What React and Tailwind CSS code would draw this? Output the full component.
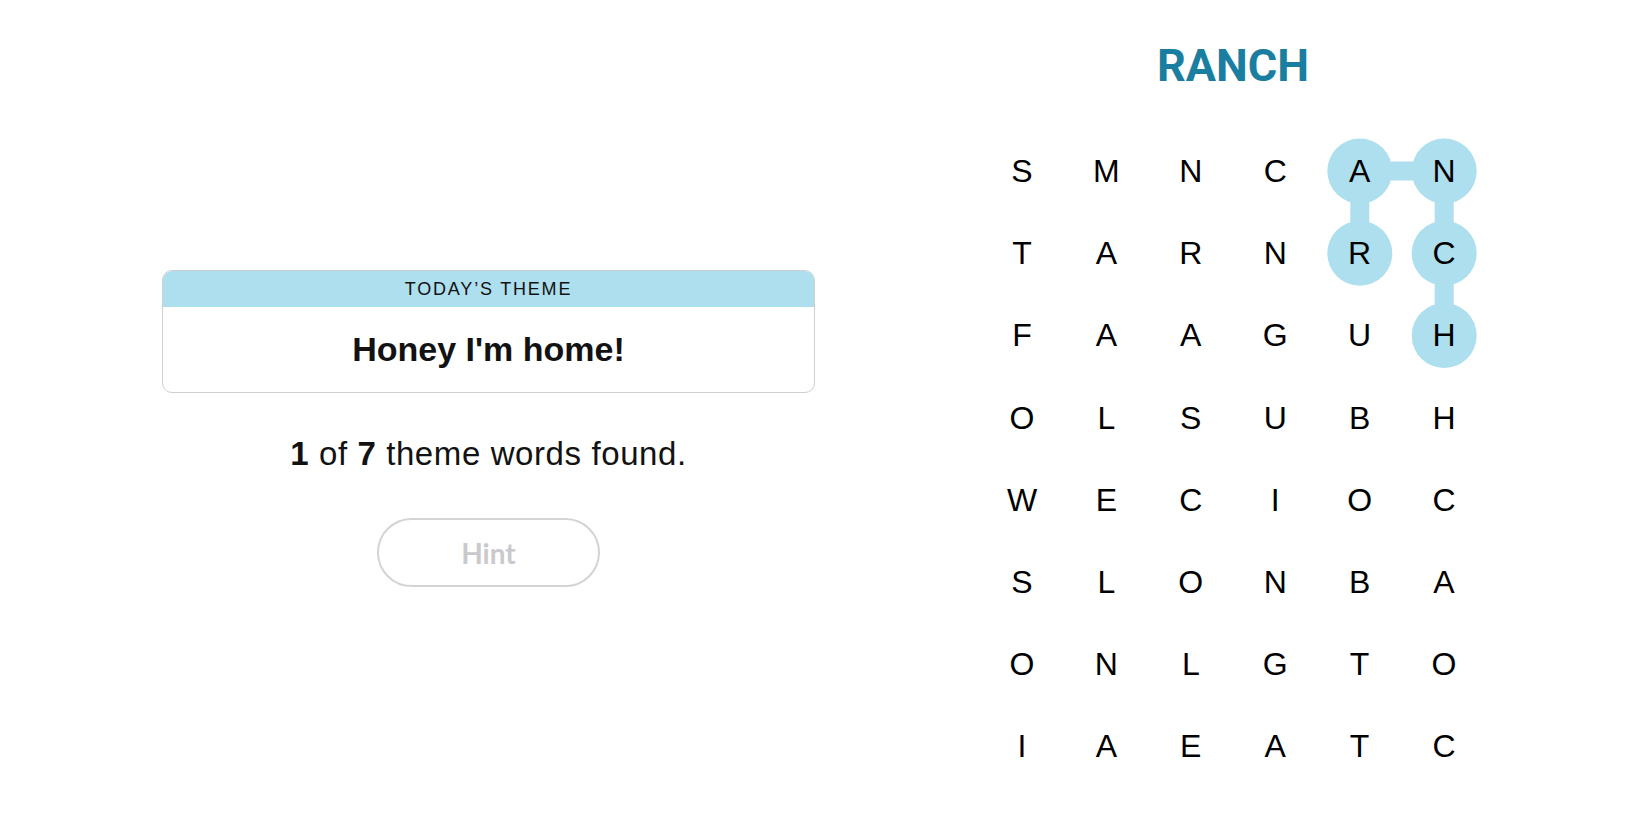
import React from 'react';

const GRID = [
  'SMNCAN',
  'TARNRC',
  'FAAGUH',
  'OLSUBH',
  'WECIOC',
  'SLONBA',
  'ONLGTO',
  'IAEATC',
];

const CELL_W = 84.4;
const CELL_H = 82.2;

// found word path: R -> A -> N -> C -> H
const FOUND = [
  [1, 4],
  [0, 4],
  [0, 5],
  [1, 5],
  [2, 5],
];

function center([r, c]) {
  return [c * CELL_W + CELL_W / 2, r * CELL_H + CELL_H / 2];
}

function FoundPath() {
  const pts = FOUND.map(center);
  return (
    <svg className="absolute inset-0 pointer-events-none" width={6 * CELL_W} height={8 * CELL_H}>
      {pts.slice(1).map((p, i) => (
        <line key={i} x1={pts[i][0]} y1={pts[i][1]} x2={p[0]} y2={p[1]} stroke="#aedfee" strokeWidth="19" />
      ))}
      {pts.map((p, i) => (
        <circle key={i} cx={p[0]} cy={p[1]} r="32.5" fill="#aedfee" />
      ))}
    </svg>
  );
}

export default function App() {
  return (
    <div className="w-[1650px] h-[825px] bg-white flex font-['Liberation_Sans',Arial,sans-serif] text-[#121212]">
      <div className="w-[653px] ml-[162px] pt-[270px] flex flex-col items-center">
        <div className="w-full rounded-[10px] border border-[#cfcfcf] overflow-hidden">
          <div className="h-[36px] bg-[#aedfee] flex items-center justify-center text-[18px] font-medium tracking-[1.8px] uppercase">
            Today’s Theme
          </div>
          <div className="h-[85px] flex items-center justify-center text-[34px] font-bold">
            Honey I'm home!
          </div>
        </div>
        <p className="mt-[41px] text-[33px] leading-[40px] tracking-[0.6px]">
          <b>1</b> of <b>7</b> theme words found.
        </p>
        <button className="mt-[44px] w-[223px] h-[69px] rounded-full border-2 border-[#d4d4d4] text-[#c9c9ce] text-[28px] font-bold font-['Lato',sans-serif]">
          Hint
        </button>
      </div>

      <div className="ml-[165px] w-[506px] pt-[42px] flex flex-col items-center">
        <div className="h-[48px] leading-[48px] text-[45px] font-bold text-[#1a7ea1] font-['Roboto',sans-serif]">
          RANCH
        </div>
        <div className="relative mt-[40px] w-[506.4px]">
          <FoundPath />
          <div className="relative grid grid-cols-[repeat(6,84.4px)] auto-rows-[82.2px]">
            {GRID.flatMap((row, r) =>
              row.split('').map((ch, c) => (
                <div key={`${r}-${c}`} className="flex items-center justify-center text-[32px] text-black">
                  {ch}
                </div>
              ))
            )}
          </div>
        </div>
      </div>
    </div>
  );
}
